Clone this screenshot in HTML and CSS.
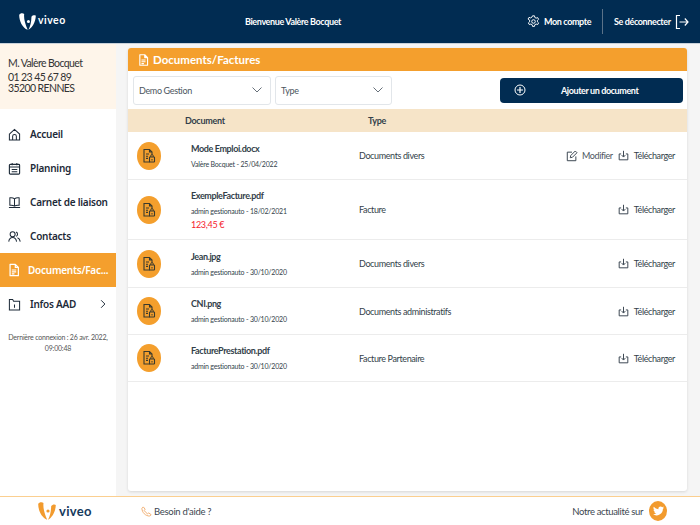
FILE: index.html
```html
<!DOCTYPE html>
<html lang="fr">
<head>
<meta charset="utf-8">
<title>Viveo - Documents</title>
<link rel="stylesheet" href="styles.css">
</head>
<body>
<svg class="defs" width="0" height="0">
  <symbol id="doc" viewBox="0 0 16 16"><path d="M3.500 1.500h6l3.500 3.500v9.500h-9.500zM9.500 1.500v3.500h3.500M5.500 8h5M5.500 10.200h5M5.500 12.400h3" fill="none" stroke="currentColor" stroke-width="1.400" stroke-linejoin="round"/></symbol>
  <symbol id="filelock" viewBox="0 0 16 16"><path d="M9 14H3V1.500h5.500L11 4v2.500M8.500 1.500V4H11M5 6h3M5 8.200h2M5 10.400h2" fill="none" stroke="currentColor" stroke-width="1.100"/><rect x="8.500" y="9" width="5" height="5" rx=".6" fill="none" stroke="currentColor" stroke-width="1.100"/><path d="M9.800 9V7.800a1.200 1.200 0 0 1 2.400 0V9" fill="none" stroke="currentColor"/><rect x="10.500" y="11" width="1" height="1.500" fill="currentColor"/></symbol>
  <symbol id="download" viewBox="0 0 14 14"><path d="M4 5H1.500v7.500h11V5H10M7 1v7.500M4.700 6.500 7 9l2.300-2.500" fill="none" stroke="currentColor" stroke-width="1.200"/></symbol>
  <symbol id="mark" viewBox="0 0 18 18"><path d="M.2 2C.8.300 4 -.3 5.500 1 5 5.500 6 10.500 9.200 17.800 3.500 15.500.2 8.500.2 2zM17.800 3c-.2 6.500-3.500 12.500-7.800 14.800 2-3.500 3-8 3.200-13.800 1-1.500 3.500-2 4.600-1z" fill="currentColor"/><circle cx="10" cy="9" r="1.600" fill="currentColor"/></symbol>
</svg>

<header class="topbar">
  <div class="brand">
    <svg class="logo" width="17" height="17"><use href="#mark"/></svg>
    <span class="brand-name">viveo</span>
  </div>
  <div class="welcome">Bienvenue Valère Bocquet</div>
  <div class="account">
    <svg viewBox="0 0 16 16" width="13" height="13"><path d="M6.800 1h2.400l.4 2 1.600.9 1.900-.7 1.200 2.100-1.500 1.300v1.800l1.500 1.300-1.200 2.100-1.900-.7-1.600.9-.4 2H6.800l-.4-2-1.600-.9-1.900.7-1.200-2.100 1.500-1.300V6.300L1.300 5l1.200-2.100 1.900.7L6 2.700z" fill="none" stroke="#fff" stroke-width="1.200" stroke-linejoin="round"/><circle cx="8" cy="8" r="2.200" fill="none" stroke="#fff" stroke-width="1.200"/></svg>
    <span>Mon compte</span>
  </div>
  <div class="logout">
    <span>Se déconnecter</span>
    <svg viewBox="0 0 14 16" width="14" height="16"><path d="M5 1.500H1.500v13H5M4.500 8h8.500M9.800 4.500 13 8l-3.200 3.500" fill="none" stroke="#fff" stroke-width="1.200"/></svg>
  </div>
</header>

<div class="layout">
  <aside class="sidebar">
    <div class="identity">
      <div class="id-name">M. Valère Bocquet</div>
      <div>01 23 45 67 89</div>
      <div>35200 RENNES</div>
    </div>
    <nav class="nav">
      <a class="nav-item">
        <svg viewBox="0 0 14 14" width="13" height="13"><path d="M1.500 6.500 7 1.500l5.500 5v6.500h-11zM5 13V9a2 2 0 0 1 4 0v4" fill="none" stroke="#1d2a38" stroke-width="1.100"/></svg>
        <span>Accueil</span>
      </a>
      <a class="nav-item">
        <svg viewBox="0 0 14 14" width="13" height="13"><rect x="1.500" y="2.500" width="11" height="10.500" rx="1" fill="none" stroke="#1d2a38" stroke-width="1.200"/><path d="M1.500 5.500h11M4.500 1v2.500M9.500 1v2.500M4 8h6M4 10.500h6" fill="none" stroke="#1d2a38" stroke-width="1.100"/></svg>
        <span>Planning</span>
      </a>
      <a class="nav-item">
        <svg viewBox="0 0 14 14" width="13" height="13"><path d="M7 3C5.500 1.800 3.500 1.800 2 2v8c1.500-.2 3.500-.2 5 1 1.500-1.200 3.500-1.200 5-1V2c-1.500-.2-3.500-.2-5 1zM7 3v8M1 12.500h12" fill="none" stroke="#1d2a38" stroke-width="1.100"/></svg>
        <span>Carnet de liaison</span>
      </a>
      <a class="nav-item">
        <svg viewBox="0 0 14 14" width="13" height="13"><circle cx="5" cy="4.500" r="2.700" fill="none" stroke="#1d2a38" stroke-width="1.100"/><path d="M.8 12.500c.4-3 2-4.500 4.200-4.500s3.800 1.500 4.200 4.500M8.800 2.100a2.700 2.700 0 0 1 0 4.800M10.200 8.400c1.600.5 2.700 2 3 4.100" fill="none" stroke="#1d2a38" stroke-width="1.100"/></svg>
        <span>Contacts</span>
      </a>
      <a class="nav-item active">
        <svg class="nav-doc" width="14" height="14"><use href="#doc"/></svg>
        <span>Documents/Fac...</span>
      </a>
      <a class="nav-item">
        <svg viewBox="0 0 14 14" width="13" height="13"><path d="M1.500 3.500V13h11V3.500H6L5 1.500H1.500zM7 7v3.500" fill="none" stroke="#1d2a38" stroke-width="1.100"/></svg>
        <span>Infos AAD</span>
        <svg class="nav-chevron" viewBox="0 0 8 12" width="6" height="10"><path d="M1.500 1 6.500 6l-5 5" fill="none" stroke="#1d2a38" stroke-width="1.300"/></svg>
      </a>
    </nav>
    <p class="last-login">Dernière connexion : 26 avr. 2022, 09:00:48</p>
  </aside>

  <main class="content">
    <section class="card">
      <h1 class="card-title">
        <svg width="13" height="14"><use href="#doc"/></svg>
        Documents/Factures
      </h1>
      <div class="filters">
        <div class="select select-a"><span>Demo Gestion</span><svg viewBox="0 0 10 6" width="10" height="6"><path d="M.5.500 5 5 9.500.500" fill="none" stroke="#67707a" stroke-width="1"/></svg></div>
        <div class="select select-b"><span>Type</span><svg viewBox="0 0 10 6" width="10" height="6"><path d="M.5.500 5 5 9.500.500" fill="none" stroke="#67707a" stroke-width="1"/></svg></div>
        <button class="add-btn">
          <svg viewBox="0 0 12 12" width="12" height="12"><circle cx="6" cy="6" r="5" fill="none" stroke="#fff" stroke-width="1"/><path d="M6 3v6M3 6h6" stroke="#fff" stroke-width="1.200"/></svg>
          <span>Ajouter un document</span>
        </button>
      </div>
      <div class="thead">
        <div class="th-doc">Document</div>
        <div class="th-type">Type</div>
      </div>

      <div class="row row-a">
        <div class="badge"><svg width="16" height="16"><use href="#filelock"/></svg></div>
        <div class="doc"><div class="doc-name">Mode Emploi.docx</div><div class="doc-meta">Valère Bocquet - 25/04/2022</div></div>
        <div class="type">Documents divers</div>
        <div class="actions">
          <span class="action action-edit"><svg viewBox="0 0 14 14" width="12" height="12"><path d="M11.500 7.500V12.500H1.500V2.500H7M5.500 6.500 10.800 1.200l2 2-5.300 5.300-2.500.5z" fill="none" stroke="#333f4a" stroke-width="1.100"/></svg>Modifier</span>
          <span class="action"><svg width="11" height="11"><use href="#download"/></svg>Télécharger</span>
        </div>
      </div>

      <div class="row row-b">
        <div class="badge"><svg width="16" height="16"><use href="#filelock"/></svg></div>
        <div class="doc"><div class="doc-name">ExempleFacture.pdf</div><div class="doc-meta">admin gestionauto - 18/02/2021</div><div class="doc-price">123,45 €</div></div>
        <div class="type">Facture</div>
        <div class="actions"><span class="action"><svg width="11" height="11"><use href="#download"/></svg>Télécharger</span></div>
      </div>

      <div class="row row-c">
        <div class="badge"><svg width="16" height="16"><use href="#filelock"/></svg></div>
        <div class="doc"><div class="doc-name">Jean.jpg</div><div class="doc-meta">admin gestionauto - 30/10/2020</div></div>
        <div class="type">Documents divers</div>
        <div class="actions"><span class="action"><svg width="11" height="11"><use href="#download"/></svg>Télécharger</span></div>
      </div>

      <div class="row row-d">
        <div class="badge"><svg width="16" height="16"><use href="#filelock"/></svg></div>
        <div class="doc"><div class="doc-name">CNI.png</div><div class="doc-meta">admin gestionauto - 30/10/2020</div></div>
        <div class="type">Documents administratifs</div>
        <div class="actions"><span class="action"><svg width="11" height="11"><use href="#download"/></svg>Télécharger</span></div>
      </div>

      <div class="row row-d">
        <div class="badge"><svg width="16" height="16"><use href="#filelock"/></svg></div>
        <div class="doc"><div class="doc-name">FacturePrestation.pdf</div><div class="doc-meta">admin gestionauto - 30/10/2020</div></div>
        <div class="type">Facture Partenaire</div>
        <div class="actions"><span class="action"><svg width="11" height="11"><use href="#download"/></svg>Télécharger</span></div>
      </div>
    </section>
  </main>
</div>

<footer class="footer">
  <div class="foot-brand">
    <svg class="foot-mark" width="18" height="18"><use href="#mark"/></svg>
    <span class="foot-name">viveo</span>
  </div>
  <div class="help">
    <svg viewBox="0 0 12 12" width="11" height="11"><path d="M2.500 1 1 2.500C1 7 5 11 9.500 11L11 9.500 8.500 7.500 7.200 8.500C5.800 7.800 4.200 6.200 3.500 4.800L4.500 3.500z" fill="none" stroke="#f0a868" stroke-width="1"/></svg>
    <span>Besoin d'aide ?</span>
  </div>
  <div class="news">
    <span>Notre actualité sur</span>
    <span class="tw"><svg viewBox="0 0 14 12" width="11" height="10"><path d="M14 1.500c-.5.200-1 .4-1.600.4.600-.3 1-.9 1.200-1.500-.5.300-1.100.6-1.800.7A2.900 2.900 0 0 0 6.900 3.700 8 8 0 0 1 1 .700a2.900 2.900 0 0 0 .9 3.800c-.5 0-.9-.1-1.300-.4 0 1.400 1 2.600 2.300 2.900-.4.100-.9.100-1.300 0 .4 1.200 1.400 2 2.700 2A5.800 5.800 0 0 1 0 10.200 8.200 8.200 0 0 0 12.600 3.300c.6-.5 1-1.100 1.400-1.800z" fill="#fff"/></svg></span>
  </div>
</footer>
</body>
</html>
```
FILE: styles.css
```css
* { box-sizing: border-box; }
html, body { margin: 0; padding: 0; }
body {
  width: 700px;
  height: 525px;
  overflow: hidden;
  display: flex;
  flex-direction: column;
  font-family: Lato, sans-serif;
  background: #f5f5f5;
  color: #2b3641;
}
.defs { position: absolute; }

.topbar {
  height: 44px;
  flex: none;
  background: #012c52;
  border-bottom: 1px solid #c9d2da;
  color: #fff;
  display: flex;
  align-items: center;
  font-size: 9px;
  font-weight: 700;
  letter-spacing: -.38px;
}
.brand { width: 245px; padding-left: 19px; display: flex; align-items: center; gap: 2px; }
.brand-name { font-size: 10.5px; font-weight: 700; letter-spacing: .5px; margin-top: -3px; }
.welcome { width: 282px; }
.account { width: 75px; display: flex; align-items: center; gap: 4px; }
.logout {
  border-left: 1px solid #5b7288;
  height: 25px;
  padding-left: 11px;
  display: flex;
  align-items: center;
  gap: 4px;
}

.layout { flex: 1; display: flex; min-height: 0; }
.sidebar { width: 116px; flex: none; background: #fff; }
.identity {
  height: 65px;
  background: #fef5ea;
  padding: 14px 0 0 8px;
  font-size: 10.5px;
  line-height: 11.5px;
  letter-spacing: -.6px;
  color: #333;
}
.id-name { margin-bottom: 2px; }
.nav { padding-top: 8px; }
.nav-item {
  height: 34px;
  display: flex;
  align-items: center;
  gap: 9px;
  padding-left: 8px;
  font-family: "Noto Sans", sans-serif;
  font-size: 10px;
  font-weight: 600;
  letter-spacing: -.25px;
  color: #1d2a38;
}
.nav-item.active { background: #f49f2d; color: #fff; gap: 7px; padding-left: 7px; }
.nav-doc { flex: none; }
.nav-chevron { margin-left: auto; margin-right: 10px; }
.last-login {
  margin: 11px 4px 0;
  font-size: 7px;
  line-height: 11px;
  letter-spacing: -.2px;
  text-align: center;
  color: #555;
}

.content { flex: 1; padding: 4px 13px 5px 12px; min-width: 0; }
.card {
  height: 100%;
  background: #fff;
  border-radius: 3px;
  box-shadow: 0 1px 3px rgba(0,0,0,.12);
}
.card-title {
  margin: 0;
  height: 23px;
  background: #f49f2d;
  border-radius: 3px 3px 0 0;
  color: #fff;
  font-size: 11.5px;
  font-weight: 700;
  display: flex;
  align-items: center;
  gap: 3px;
  padding-left: 9px;
}
.filters { height: 38px; display: flex; align-items: center; padding-left: 5px; }
.select {
  height: 29px;
  border: 1px solid #e2e6ea;
  border-radius: 3px;
  display: flex;
  align-items: center;
  justify-content: space-between;
  padding: 0 8px 0 5px;
  font-size: 9px;
  letter-spacing: -.35px;
  color: #4c5660;
}
.select-a { width: 138px; margin-right: 4px; }
.select-b { width: 117px; margin-right: 108px; }
.add-btn {
  width: 183px;
  height: 25px;
  border: 0;
  border-radius: 4px;
  background: #012c52;
  color: #fff;
  font: 700 9px Lato, sans-serif;
  letter-spacing: -.4px;
  display: flex;
  align-items: center;
  padding: 0 0 0 14px;
}
.add-btn span { margin-left: 35px; }
.thead {
  height: 23px;
  background: #f6e4c8;
  display: flex;
  align-items: center;
  font-size: 9px;
  font-weight: 700;
  letter-spacing: -.3px;
  color: #333f4a;
}
.th-doc { width: 240px; padding-left: 57px; }

.row {
  display: flex;
  align-items: center;
  border-bottom: 1px solid #ececec;
  font-size: 9px;
  letter-spacing: -.38px;
  color: #333f4a;
}
.row-a { height: 48px; }
.row-b { height: 60px; }
.row-c { height: 48px; }
.row-d { height: 47px; }
.badge {
  width: 24px;
  height: 28px;
  margin-left: 9px;
  flex: none;
  border-radius: 50%;
  background: #f49f2d;
  color: #3a3a2e;
  display: flex;
  align-items: center;
  justify-content: center;
}
.doc { width: 168px; margin-left: 30px; flex: none; }
.doc-name { font-size: 9px; font-weight: 700; line-height: 14px; padding-top: 1px; }
.doc-meta { font-size: 7px; line-height: 14px; margin-top: 1px; letter-spacing: -.2px; }
.doc-price { font-size: 9px; line-height: 13px; color: #f5222d; letter-spacing: -.3px; }
.type { flex: 1; }
.actions { display: flex; gap: 5px; padding-right: 12px; color: #333f4a; }
.action { display: flex; align-items: center; gap: 5px; font-size: 9px; }
.action-edit { color: #4c5660; gap: 4px; }

.footer {
  height: 29px;
  flex: none;
  background: #fff;
  border-top: 1px solid #fbcf90;
  display: flex;
  align-items: center;
  font-size: 9.5px;
  color: #3b4650;
}
.foot-brand { width: 141px; padding-left: 38px; display: flex; align-items: center; gap: 3px; }
.foot-mark { color: #f29b2e; }
.foot-name { font-size: 13px; font-weight: 700; color: #15395c; letter-spacing: .3px; }
.help { display: flex; align-items: center; gap: 2px; letter-spacing: -.3px; }
.news { margin-left: auto; padding-right: 33px; display: flex; align-items: center; gap: 6px; letter-spacing: -.35px; }
.tw {
  width: 18px;
  height: 20px;
  border-radius: 50%;
  background: #f29b2e;
  display: flex;
  align-items: center;
  justify-content: center;
}
```
